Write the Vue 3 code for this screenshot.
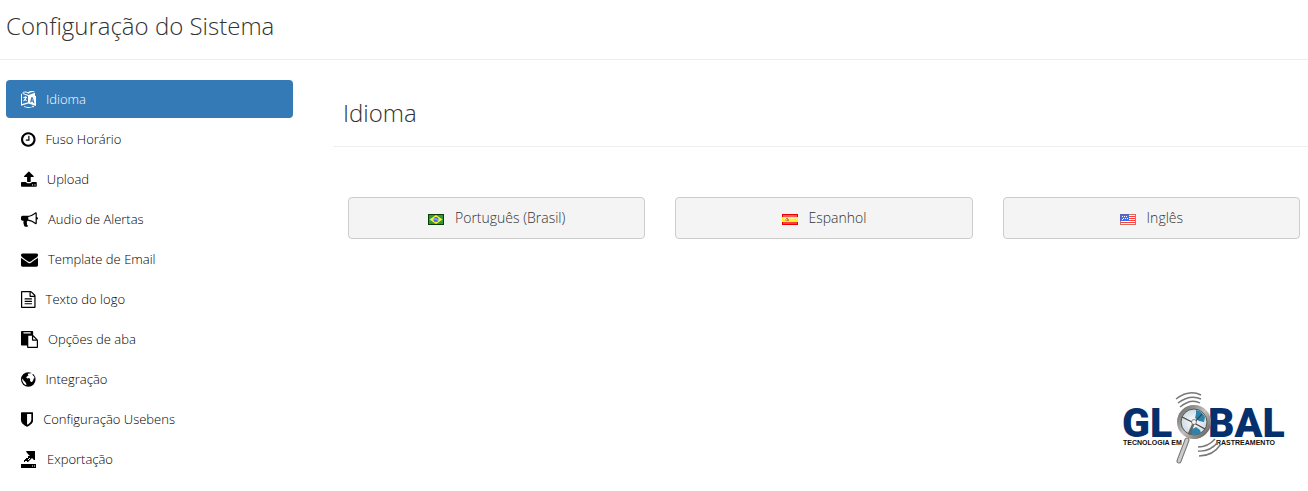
<template>
  <div class="page">
    <header class="page-header">
      <h1>Configuração do Sistema</h1>
    </header>

    <div class="layout">
      <nav class="sidebar">
        <a
          v-for="item in menu"
          :key="item.id"
          href="#"
          class="menu-item"
          :class="{ active: item.id === current }"
          @click.prevent="current = item.id"
        >
          <svg class="menu-icon" :viewBox="item.box" aria-hidden="true">
            <path fill-rule="evenodd" :d="item.path" />
          </svg>
          <span>{{ item.label }}</span>
        </a>
      </nav>

      <main class="content">
        <h2>{{ title }}</h2>

        <div class="languages">
          <button type="button" class="language">
            <svg class="flag" viewBox="0 0 16 11" aria-hidden="true">
              <rect width="16" height="11" fill="#0b3d0b" />
              <rect x="1" y="1" width="14" height="9" fill="#2f9a35" />
              <path d="M8 1L14.500 5.500 8 10 1.500 5.500z" fill="#fbf03a" />
              <circle cx="8" cy="5.500" r="2.500" fill="#3c6fdc" />
              <path d="M5.800 4.800q2.500-.4 4.300 1.700" stroke="#cfe2ff" stroke-width=".8" fill="none" />
            </svg>
            <span>Português (Brasil)</span>
          </button>
          <button type="button" class="language">
            <svg class="flag" viewBox="0 0 16 11" aria-hidden="true">
              <rect width="16" height="11" fill="#f00000" />
              <rect x="1" y="1" width="14" height="2" fill="#ff5c5c" />
              <rect x="1" y="8" width="14" height="2" fill="#f54343" />
              <rect y="3" width="16" height="5" fill="#fff21c" />
              <rect x="1" y="4" width="14" height="1" fill="#fff78a" />
              <path d="M4 4h2v1h1v2H4V6h1V5H4z" fill="#d8843f" />
              <path d="M3 5h1v2H3z" fill="#e9b96a" />
            </svg>
            <span>Espanhol</span>
          </button>
          <button type="button" class="language">
            <svg class="flag" viewBox="0 0 16 11" aria-hidden="true">
              <rect width="16" height="11" fill="#fff" />
              <path d="M8 2.500h7M8 4.500h7M8 6.500h7M1 8.500h14" stroke="#ff3b3b" />
              <path d="M9 .5h7M15.500 0v11M0 10.500h16M.5 7v4" stroke="#d0705c" />
              <rect width="9" height="7" fill="#3a72e8" />
              <path d="M0 .5h9M.5 0v7" stroke="#5a5fc0" />
              <path d="M2 2h1v1H2zM4 2h1v1H4zM6 2h1v1H6zM3 4h1v1H3zM5 4h1v1H5zM7 4h1v1H7zM2 5h1v1H2z" fill="#fff" />
            </svg>
            <span>Inglês</span>
          </button>
        </div>

        <svg class="brand" viewBox="0 0 168 76" role="img" aria-label="Global Tecnologia em Rastreamento">
          <defs>
            <linearGradient id="rim" x1="0" y1="0" x2="1" y2="1">
              <stop offset="0" stop-color="#666" />
              <stop offset=".5" stop-color="#c4c0bc" />
              <stop offset="1" stop-color="#5c5856" />
            </linearGradient>
            <radialGradient id="lens">
              <stop offset="0" stop-color="#fff" />
              <stop offset="1" stop-color="#c5d5de" />
            </radialGradient>
          </defs>
          <text class="brand-name" x="2" y="47">GL</text>
          <text class="brand-name" x="88" y="47">BAL</text>
          <text class="brand-tag" x="3" y="55">TECNOLOGIA EM</text>
          <text class="brand-tag" x="96" y="55">RASTREAMENTO</text>
          <!-- ondas de sinal -->
          <g fill="none" stroke="#777" stroke-width="1.400">
            <path d="M56 9Q69 -1 81 5" />
            <path d="M58 13Q70 4 81 9" />
            <path d="M60 17Q71 8 80 13" />
            <path d="M78 57Q88 57 95 49" />
            <path d="M78 61Q90 62 98 52" />
            <path d="M79 66Q93 66 101 54" />
          </g>
          <!-- lupa -->
          <path d="M67 50L59 71" stroke="#777" stroke-width="5" stroke-linecap="round" />
          <path d="M67 50L59 71" stroke="#ccc" stroke-width="3" stroke-linecap="round" />
          <circle cx="74" cy="32" r="15" fill="url(#lens)" stroke="url(#rim)" stroke-width="4" />
          <circle cx="74" cy="32" r="13" fill="none" stroke="#555" stroke-width="1" />
          <path d="M76 20q6 1 9 7l-1 5-5-1-4-3 1-4zM71 40l5-3 4 3 1 3q-5 3-11 1z" fill="#2b84ad" />
          <path d="M62 27l12 6 11 6M74 33l-5 11M74 33l8-9" fill="none" stroke="#444" stroke-width="1.200" />
          <path d="M72 34l-4 9 3 1 3-9z" fill="#666" />
          <circle cx="74" cy="32" r="2.500" fill="#f5f5f5" stroke="#555" stroke-width=".7" />
        </svg>
      </main>
    </div>
  </div>
</template>

<script setup>
import { ref, computed } from 'vue'

const current = ref('idioma')

const menu = [
  {
    id: 'idioma',
    label: 'Idioma',
    box: '0 0 15 17',
    path: 'M0 3L1 2.700V13l6-1.700V5L1.800 3V2L7.500 4 14 1.800v3L15 5v10L7.500 12.500 0 14.800zM2.200 6.200l1.600-.2V5h.9v.9l1.300-.1v.9l-.5.100q-.2 1-.8 1.800l1.300 1-.6.7-1.300-1q-.8.900-1.600 1.200l-.3-.9q.7-.3 1.200-.9l-.7-.9.700-.4.500.6.400-1.100-2.100.200zM10.500 6L9 11.200l1.100.300.3-1.100 1.600.4.300 1.300 1.200.3L11.900 6.400zM11.200 7.500l.5 2-1-.200zM1.500 1Q5-.3 7 1.300 9-.6 13.300.3L13.500 1.200Q9.500.6 7.500 2.700 5.500.9 1.700 1.800zM3 15.300q4.500 1.400 8.300.2l-.3-.7 2.200.3-.8 1.500-.5-.5q-4.500 1.600-9 0z'
  },
  {
    id: 'fuso',
    label: 'Fuso Horário',
    box: '128 0 1536 1792',
    path: 'M1024 544v448q0 14-9 23t-23 9h-320q-14 0-23-9t-9-23v-64q0-14 9-23t23-9h224v-352q0-14 9-23t23-9h64q14 0 23 9t9 23zm416 352q0-148-73-273t-198-198-273-73-273 73-198 198-73 273 73 273 198 198 273 73 273-73 198-198 73-273zm224 0q0 209-103 385.500t-279.500 279.500-385.500 103-385.500-103-279.500-279.500-103-385.500 103-385.500 279.500-279.500 385.500-103 385.500 103 279.500 279.500 103 385.500z'
  },
  {
    id: 'upload',
    label: 'Upload',
    box: '64 0 1664 1792',
    path: 'M1344 1472q0-26-19-45t-45-19-45 19-19 45 19 45 45 19 45-19 19-45zm256 0q0-26-19-45t-45-19-45 19-19 45 19 45 45 19 45-19 19-45zm128-224v320q0 40-28 68t-68 28h-1472q-40 0-68-28t-28-68v-320q0-40 28-68t68-28h427q21 56 70.500 92t110.500 36h256q61 0 110.500-36t70.500-92h427q40 0 68 28t28 68zm-325-648q-17 40-59 40h-256v448q0 26-19 45t-45 19h-256q-26 0-45-19t-19-45v-448h-256q-42 0-59-40-17-39 14-69l448-448q18-19 45-19t45 19l448 448q31 30 14 69z'
  },
  {
    id: 'audio',
    label: 'Audio de Alertas',
    box: '0 0 1792 1792',
    path: 'M1664 640q53 0 90.500 37.500t37.500 90.500-37.500 90.500-90.500 37.500v384q0 52-38 90t-90 38q-417-347-812-380-58 19-91 66t-31 100.500 40 92.500q-20 33-23 65.500t6 58 33.500 55 48 50 61.500 50.500q-29 58-111.500 83t-168.500 11.500-132-55.500q-7-23-29.500-87.500t-32-94.500-23-89-15-101 3.500-98.500 22-110.500h-122q-66 0-113-47t-47-113v-192q0-66 47-113t113-47h480q435 0 896-384 52 0 90 38t38 90v384zm-128 604v-954q-394 302-768 343v270q377 42 768 341z'
  },
  {
    id: 'email',
    label: 'Template de Email',
    box: '0 0 1792 1792',
    path: 'M1792 710v794q0 66-47 113t-113 47h-1472q-66 0-113-47t-47-113v-794q44 49 101 87 362 246 497 345 57 42 92.500 65.500t94.500 48 110 24.500h2q51 0 110-24.500t94.500-48 92.500-65.500q170-123 498-345 57-39 100-87zm0-294q0 79-49 151t-122 123q-376 261-468 325-10 7-42.500 31t-54 38.500-52 32.500-57.500 27-50 9h-2q-23 0-50-9t-57.500-27-52-32.500-54-38.500-42.500-31q-91-64-262-182.500t-205-142.500q-62-42-117-115.500t-55-136.500q0-78 41.500-130t118.500-52h1472q65 0 112.500 47t47.500 113z'
  },
  {
    id: 'texto',
    label: 'Texto do logo',
    box: '128 0 1536 1792',
    path: 'M1596 380q28 28 48 76t20 88v1152q0 40-28 68t-68 28h-1344q-40 0-68-28t-28-68v-1600q0-40 28-68t68-28h896q40 0 88 20t76 48zm-444-244v376h376q-10-29-22-41l-313-313q-12-12-41-22zm384 1528v-1024h-416q-40 0-68-28t-28-68v-416h-768v1536h1280zM512 768h768v128H512zM512 1024h768v128H512zM512 1280h768v128H512z'
  },
  {
    id: 'aba',
    label: 'Opções de aba',
    box: '0 0 1792 1792',
    path: 'M768 1664h896v-640h-416q-40 0-68-28t-28-68v-416h-384v1152zm256-1440v-64q0-13-9.500-22.500t-22.500-9.500h-704q-13 0-22.500 9.500t-9.500 22.500v64q0 13 9.500 22.500t22.500 9.500h704q13 0 22.500-9.500t9.500-22.500zm256 672h299l-299-299v299zm512 128v672q0 40-28 68t-68 28h-960q-40 0-68-28t-28-68v-160h-544q-40 0-68-28t-28-68v-1344q0-40 28-68t68-28h1088q40 0 68 28t28 68v328q21 13 36 28l408 408q28 28 48 76t20 88z'
  },
  {
    id: 'integracao',
    label: 'Integração',
    box: '128 0 1536 1792',
    path: 'M896 128a768 768 0 1 1 0 1536a768 768 0 1 1 0-1536zM900 260l-60 130 90 60-180 130-70 140 120 60 180-30 120 120-30 130 120 160 100-10 130-180 30-160 100-80-20-130-110-90-80-120 20-90-160-80-120 30zM270 800l-20 140 60 230 150 200 210 130 30-120-90-130-40-120-130-80-70-120z'
  },
  {
    id: 'usebens',
    label: 'Configuração Usebens',
    box: '320 0 1280 1792',
    path: 'M1408 960v-640h-448v1137q119-63 213-137 235-184 235-360zm192-768v768q0 86-33.500 170.500t-83 150-118 127.500-126.500 103-121 77.500-89.500 49.500-42.500 20q-12 6-26 6t-26-6q-16-7-42.500-20t-89.500-49.500-121-77.500-126.500-103-118-127.500-83-150-33.500-170.500v-768q0-26 19-45t45-19h1152q26 0 45 19t19 45z'
  },
  {
    id: 'exportacao',
    label: 'Exportação',
    box: '0 0 16 17',
    path: 'M0 13h15v4H0zM11 14.500v1h1v-1zM13 14.500v1h1v-1zM5 0h9v9h-1l-2-2-4 4H6v-1H4V8h1V7h2V5h2L6 2zM3 9h1v2H3zM8 7v1H7v1h1V8h1V7z'
  }
]

const title = computed(() => menu.find(item => item.id === current.value).label)
</script>

<style>
body {
  background: #fff;
}
</style>

<style scoped>
.page {
  font-family: "Open Sans", "Noto Sans", sans-serif;
  font-weight: 300;
  color: #333;
}

.page * {
  box-sizing: border-box;
}

h1,
h2 {
  margin: 0;
  font-size: 24px;
  font-weight: 300;
  line-height: 26px;
}

.page-header {
  padding: 13px 6px 20px;
  border-bottom: 1px solid #eee;
}

.layout {
  display: flex;
  padding-top: 20px;
}

.sidebar {
  width: 25%;
  padding: 0 34px 8px 6px;
  display: flex;
  flex-direction: column;
  gap: 2px;
}

.menu-item {
  display: flex;
  align-items: center;
  gap: 10px;
  height: 38px;
  padding: 0 15px;
  border-radius: 4px;
  font-size: 13px;
  line-height: 18px;
  color: #000;
  text-decoration: none;
}

.menu-item.active {
  background: #337ab7;
  color: #fff;
}

.menu-icon {
  height: 17px;
  flex: none;
  fill: currentColor;
}

.content {
  flex: 1;
  padding-left: 6px;
  display: flex;
  flex-direction: column;
}

h2 {
  padding: 20px 10px;
  border-bottom: 1px solid #eee;
}

.languages {
  display: grid;
  grid-template-columns: repeat(3, 1fr);
  gap: 30px;
  padding: 50px 8px 0 15px;
}

.language {
  display: flex;
  align-items: center;
  justify-content: center;
  gap: 11px;
  height: 42px;
  padding: 0 12px;
  border: 1px solid #ccc;
  border-radius: 4px;
  background: #f4f4f4;
  font: inherit;
  font-size: 14px;
  line-height: 20px;
  color: #333;
  cursor: pointer;
}

.flag {
  width: 16px;
  height: 11px;
  margin-top: 3px;
}

.brand {
  width: 168px;
  height: 76px;
  margin: auto 20px 20px 0;
  align-self: flex-end;
}

.brand-name {
  font-family: Roboto, "Liberation Sans", sans-serif;
  font-size: 41px;
  font-weight: 900;
  fill: #04306e;
}

.brand-tag {
  font-family: "Liberation Sans", sans-serif;
  font-size: 7px;
  font-weight: 700;
  fill: #111;
}
</style>
